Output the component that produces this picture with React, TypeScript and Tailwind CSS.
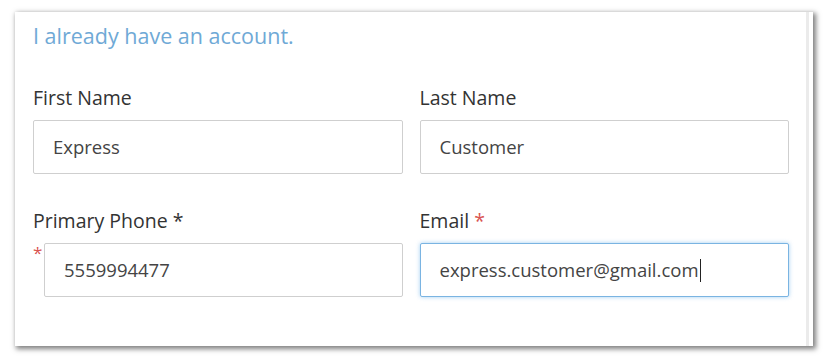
import React from 'react';

const Field: React.FC<{ label: React.ReactNode; value: string; focused?: boolean; marker?: boolean }> = ({
  label,
  value,
  focused,
  marker,
}) => (
  <div>
    <div className="h-[24px] text-[19.5px] leading-[24px] text-[#333]">{label}</div>
    <div className="mt-[10px] flex">
      {marker && <span className="w-[11px] pt-[2px] text-[17px] leading-[16px] text-[#d9534f]">*</span>}
      <div
        className={
          'flex h-[54px] flex-1 items-center rounded-[2px] border bg-white px-[19px] text-[18.5px] text-[#444] ' +
          (focused
            ? 'border-[#7ab4e2] shadow-[0_0_4px_rgba(102,175,233,0.6)]'
            : 'border-[#cfcfcf]')
        }
      >
        {value}
        {focused && <span className="ml-[1px] inline-block h-[23px] w-[1.5px] bg-[#222]" />}
      </div>
    </div>
  </div>
);

export default function App() {
  return (
    <div className="h-[359px] w-[829px] bg-white pl-[15px] pt-[12px]" style={{ fontFamily: '"Open Sans", sans-serif' }}>
      <div className="h-[334px] w-[798px] bg-white shadow-[2px_2px_5px_1px_rgba(0,0,0,0.5)]">
        <div className="mr-[4px] h-full border-r-[3px] border-[#ebebeb] pl-[18px] pr-[17px] pt-[10px]">
          <div className="h-[28px] text-[21.5px] leading-[28px] text-[#6fa9d6]">I already have an account.</div>
          <div className="mt-[36px] grid grid-cols-2 gap-x-[17px] gap-y-[35px]">
            <Field label="First Name" value="Express" />
            <Field label="Last Name" value="Customer" />
            <Field label="Primary Phone *" value="5559994477" marker />
            <Field
              label={
                <>
                  Email <span className="text-[#d9534f]">*</span>
                </>
              }
              value="express.customer@gmail.com"
              focused
            />
          </div>
        </div>
      </div>
    </div>
  );
}
